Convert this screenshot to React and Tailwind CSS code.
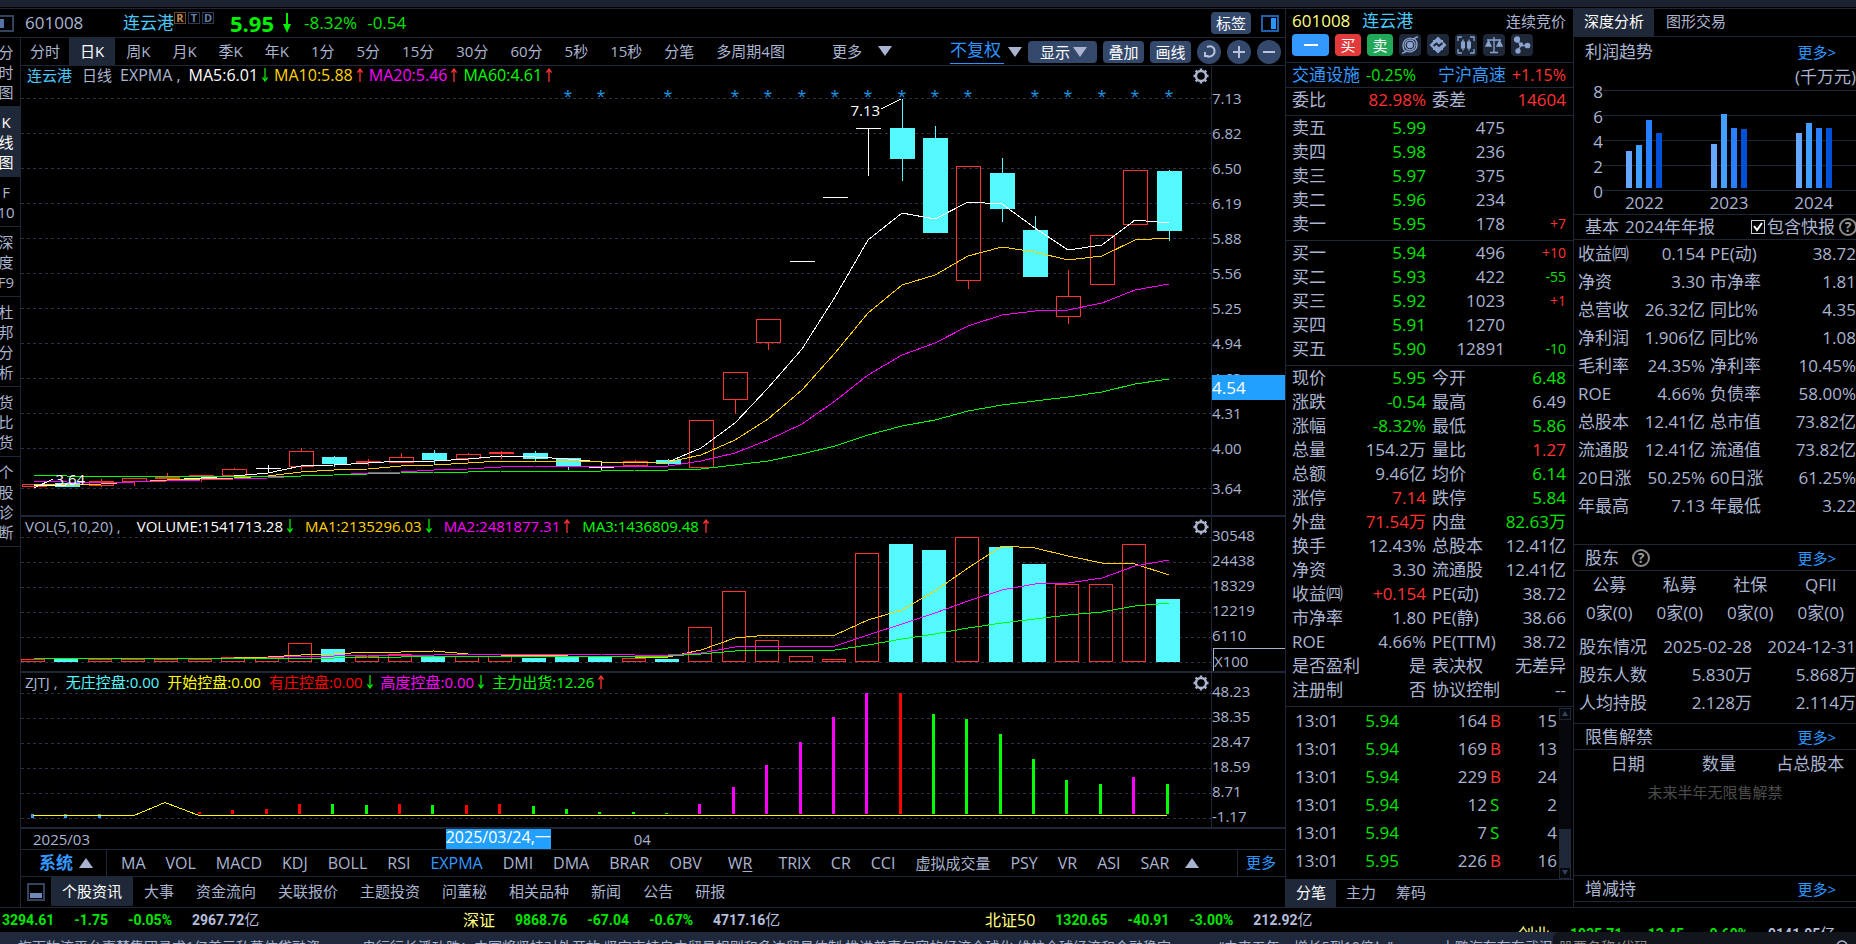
import { Fragment } from 'react'
import clsx from 'clsx'

const SIDE = ['分时图', 'K线图', 'F|10', '深度|F9', '杜邦分析', '货比货', '个股诊断']
const PERIODS = ['分时', '日K', '周K', '月K', '季K', '年K', '1分', '5分', '15分', '30分', '60分', '5秒', '15秒', '分笔', '多周期4图']
const INDICATORS = ['MA', 'VOL', 'MACD', 'KDJ', 'BOLL', 'RSI', 'EXPMA', 'DMI', 'DMA', 'BRAR', 'OBV', 'WR', 'TRIX', 'CR', 'CCI', '虚拟成交量', 'PSY', 'VR', 'ASI', 'SAR']
const INFO_TABS = ['个股资讯', '大事', '资金流向', '关联报价', '主题投资', '问董秘', '相关品种', '新闻', '公告', '研报']

const UP = '#ff3232'
const DOWN = '#54f8ff'

// chart space: x 21..1211, one bar every 33.37
const X = i => Math.round(34 + i * 33.37)

// [type, body top, body bottom, high, low]
const CANDLES = [
  ['u', 484, 486, 484, 486], ['d', 483, 487, 483, 487], ['u', 481, 485, 479, 487], ['u', 478, 481, 478, 486],
  ['u', 477, 478, 473, 480], ['u', 475, 476, 475, 482], ['u', 469, 475, 468, 476], ['x', 468, 468, 465, 472],
  ['u', 451, 466, 448, 470], ['d', 457, 464, 456, 467], ['u', 461, 462, 459, 466], ['u', 457, 462, 453, 462],
  ['d', 453, 460, 450, 465], ['u', 454, 458, 453, 462], ['u', 452, 453, 451, 459], ['d', 453, 459, 451, 461],
  ['d', 458, 466, 458, 470], ['x', 467, 467, 461, 471], ['u', 461, 465, 460, 465], ['d', 460, 464, 459, 466],
  ['u', 420, 467, 420, 467], ['u', 372, 399, 372, 414], ['u', 319, 342, 319, 350], ['x', 261, 261, 261, 261],
  ['x', 197, 197, 197, 197], ['x', 128, 128, 128, 176], ['d', 128, 159, 99, 181], ['d', 138, 233, 126, 233],
  ['u', 166, 280, 166, 289], ['d', 173, 209, 158, 222], ['d', 230, 277, 216, 277], ['u', 296, 316, 270, 324],
  ['u', 235, 284, 235, 284], ['u', 170, 224, 170, 224], ['d', 171, 231, 170, 241],
]

const MAS = [
  ['#ffffff', [486, 485, 484, 482, 480, 478, 476, 473, 466, 465, 463, 461, 461, 459, 456, 457, 459, 462, 462, 462, 448, 423, 388, 349, 297, 240, 213, 219, 202, 204, 228, 250, 245, 220, 223]],
  ['#ffd200', [484, 484, 484, 482, 480, 479, 478, 476, 472, 470, 469, 466, 465, 463, 461, 461, 461, 462, 462, 462, 455, 440, 419, 390, 353, 313, 285, 275, 256, 247, 252, 260, 256, 240, 238]],
  ['#ff00ff', [481, 482, 482, 482, 481, 480, 479, 478, 476, 475, 473, 472, 470, 469, 467, 466, 466, 466, 466, 466, 461, 453, 440, 424, 401, 375, 355, 343, 326, 315, 311, 310, 303, 290, 284]],
  ['#00ff00', [475, 476, 476, 476, 476, 476, 476, 476, 476, 475, 474, 473, 472, 472, 471, 471, 471, 471, 470, 470, 469, 465, 461, 454, 446, 435, 426, 420, 411, 405, 401, 397, 392, 384, 379]],
]

const VOL_TOPS = [659, 659, 659, 659, 659, 659, 657, 657, 643, 649, 656, 654, 656, 656, 656, 658, 657, 657, 658, 659, 627, 591, 640, 656, 659, 553, 544, 550, 537, 547, 564, 584, 584, 544, 599]
const VOL_DOWN = [1, 9, 12, 15, 16, 17, 19, 26, 27, 29, 30, 34]
const VOL_MAS = [
  ['#ffd200', [658, 658, 658, 658, 658, 658, 658, 657, 655, 654, 652, 652, 651, 654, 655, 655, 656, 656, 657, 657, 650, 638, 635, 635, 635, 620, 610, 591, 568, 546, 548, 556, 563, 564, 575]],
  ['#ff00ff', [658, 658, 658, 658, 658, 658, 658, 658, 656, 656, 655, 655, 655, 654, 654, 654, 654, 654, 655, 655, 653, 647, 646, 646, 646, 635, 624, 613, 601, 590, 584, 583, 578, 566, 560]],
  ['#00ff00', [658, 658, 658, 658, 658, 658, 658, 658, 658, 658, 657, 657, 656, 656, 656, 656, 656, 656, 656, 656, 654, 651, 650, 650, 650, 645, 639, 634, 628, 623, 619, 615, 612, 606, 603]],
]

const FLOW_COLORS = { r: '#ff0000', g: '#00ff00', m: '#ff00ff' }
const FLOW = [
  [5, 812, 'r'], [6, 810, 'r'], [7, 809, 'r'], [8, 804, 'r'], [9, 804, 'g'], [10, 805, 'g'], [11, 804, 'r'], [12, 805, 'g'],
  [13, 805, 'r'], [14, 804, 'r'], [15, 806, 'g'], [16, 809, 'g'], [17, 812, 'g'], [18, 812, 'g'], [19, 813, 'g'], [20, 804, 'm'],
  [21, 787, 'm'], [22, 765, 'm'], [23, 742, 'm'], [24, 717, 'm'], [25, 693, 'm'], [26, 693, 'r'], [27, 714, 'g'], [28, 719, 'g'],
  [29, 734, 'g'], [30, 759, 'g'], [31, 780, 'g'], [32, 784, 'g'], [33, 777, 'm'], [34, 784, 'g'],
]
const STARS = [16, 17, 19, 21, 22, 23, 24, 25, 26, 27, 28, 30, 31, 32, 33, 34]

const SELLS = [['卖五', '5.99', '475'], ['卖四', '5.98', '236'], ['卖三', '5.97', '375'], ['卖二', '5.96', '234'], ['卖一', '5.95', '178', '+7']]
const BUYS = [['买一', '5.94', '496', '+10'], ['买二', '5.93', '422', '-55'], ['买三', '5.92', '1023', '+1'], ['买四', '5.91', '1270'], ['买五', '5.90', '12891', '-10']]

const STATS = [
  ['现价', '5.95', 'g', '今开', '6.48', 'g'],
  ['涨跌', '-0.54', 'g', '最高', '6.49', ''],
  ['涨幅', '-8.32%', 'g', '最低', '5.86', 'g'],
  ['总量', '154.2万', '', '量比', '1.27', 'r'],
  ['总额', '9.46亿', '', '均价', '6.14', 'g'],
  ['涨停', '7.14', 'r', '跌停', '5.84', 'g'],
  ['外盘', '71.54万', 'r', '内盘', '82.63万', 'g'],
  ['换手', '12.43%', '', '总股本', '12.41亿', ''],
  ['净资', '3.30', '', '流通股', '12.41亿', ''],
  ['收益㈣', '+0.154', 'r', 'PE(动)', '38.72', ''],
  ['市净率', '1.80', '', 'PE(静)', '38.66', ''],
  ['ROE', '4.66%', '', 'PE(TTM)', '38.72', ''],
  ['是否盈利', '是', '', '表决权', '无差异', ''],
  ['注册制', '否', '', '协议控制', '--', ''],
]

const TICKS = [
  ['5.94', '164', 'B', '15'], ['5.94', '169', 'B', '13'], ['5.94', '229', 'B', '24'],
  ['5.94', '12', 'S', '2'], ['5.94', '7', 'S', '4'], ['5.95', '226', 'B', '16'],
]

const BASICS = [
  ['收益㈣', '0.154', 'PE(动)', '38.72'],
  ['净资', '3.30', '市净率', '1.81'],
  ['总营收', '26.32亿', '同比%', '4.35'],
  ['净利润', '1.906亿', '同比%', '1.08'],
  ['毛利率', '24.35%', '净利率', '10.45%'],
  ['ROE', '4.66%', '负债率', '58.00%'],
  ['总股本', '12.41亿', '总市值', '73.82亿'],
  ['流通股', '12.41亿', '流通值', '73.82亿'],
  ['20日涨', '50.25%', '60日涨', '61.25%'],
  ['年最高', '7.13', '年最低', '3.22'],
]

const PROFIT = [[1626, [151, 145, 120, 133]], [1711, [144, 114, 128, 129]], [1796, [133, 123, 128, 128]]]
const PROFIT_COLORS = ['#66a8ff', '#409fff', '#2980ff', '#0050d8']

const tone = t => (t === 'g' ? 'text-[#00e600]' : t === 'r' ? 'text-[#ff3232]' : '')
const line = ys => ys.map((y, i) => `${X(i)},${y}`).join(' ')

function Arrow({ up }) {
  return (
    <svg width="6" height="14" viewBox="0 0 6 14" fill="none" stroke={up ? '#ff3232' : '#00e600'} strokeWidth="1.3" className={up ? 'rotate-180' : ''}>
      <path d="M3 0V13M0.5 9.5L3 13L5.5 9.5" />
    </svg>
  )
}

function Triangle({ up }) {
  return (
    <svg width="14" height="10" viewBox="0 0 14 10" fill="#aab4d0" className={clsx('pointer-events-none shrink-0', up && 'rotate-180')}>
      <path d="M0 0H14L7 10Z" />
    </svg>
  )
}

function Gear() {
  return (
    <button aria-label="设置" className="absolute right-0.5 top-0.5">
      <svg width="16" height="16" viewBox="0 0 16 16" fill="none" stroke="#aab4d0" strokeWidth="2.4">
        <circle cx="8" cy="8" r="5" />
        <path d="M8 0.5V3M8 13V15.5M0.5 8H3M13 8H15.5M2.7 2.7L4.4 4.4M11.6 11.6L13.3 13.3M13.3 2.7L11.6 4.4M4.4 11.6L2.7 13.3" />
      </svg>
    </button>
  )
}

function Grid({ ys }) {
  return ys.map(y => <path key={y} d={`M21 ${y}.5H1211`} stroke="#2a3246" strokeDasharray="3 3" />)
}

function Legend({ children, className }) {
  return <div className={clsx('absolute left-1 top-0 flex items-center leading-[18px] whitespace-nowrap', className)}>{children}</div>
}

function Item({ color, up, children }) {
  return (
    <span className={clsx('flex items-center gap-1', color)}>
      {children}
      {up !== undefined && <Arrow up={up} />}
    </span>
  )
}

function Header() {
  return (
    <header className="flex items-center h-[29px] border-b border-[#1e2737] pr-1.5 text-[17px] leading-6">
      <button aria-label="左栏" className="-ml-1 w-[29px]">
        <svg width="18" height="17" viewBox="0 0 18 17"><rect x="1" y="1" width="16" height="15" fill="none" stroke="#33425f" strokeWidth="2" /><rect x="3" y="4" width="5" height="9" fill="#5673a8" /></svg>
      </button>
      <span className="w-[98px]">601008</span>
      <span className="text-[#4cc8fa]">连云港</span>
      <span className="flex gap-0.5 self-start pt-[3px] text-[11px] leading-3 font-bold">
        {['R', 'T', 'D'].map(b => (
          <span key={b} className={clsx('w-3 h-3 text-center border', b === 'R' ? 'border-[#6b4a2a] text-[#c08a50]' : 'border-[#2c3c58] text-[#6480ac]')}>
            <span className="block -mt-px">{b}</span>
          </span>
        ))}
      </span>
      <strong className="ml-4 text-[22px] text-[#00f000]">5.95</strong>
      <svg width="10" height="20" viewBox="0 0 10 20" className="ml-2" fill="#00f000"><path d="M4 0H6V11H9L5 20L1 11H4Z" /></svg>
      <span className="ml-3 text-[#00e600]">-8.32%</span>
      <span className="ml-2.5 text-[#00e600]">-0.54</span>
      <button className="ml-auto w-10 h-[22px] rounded bg-[#33486b] text-[15px] leading-5 text-white">标签</button>
      <button aria-label="右栏" className="ml-2.5">
        <svg width="18" height="17" viewBox="0 0 18 17"><rect x="1" y="1" width="16" height="15" fill="none" stroke="#1e5fae" strokeWidth="2" /><rect x="10" y="3" width="5" height="11" fill="#2b95ff" /></svg>
      </button>
    </header>
  )
}

function Sidebar() {
  return (
    <aside className="w-[29px] -ml-2 shrink-0 border-r border-[#1e2737] text-[15px] leading-5 text-center">
      {SIDE.map((s, i) => (
        <button key={s} className={clsx('block w-full pb-1 border-b border-[#1e2737]', i === 0 ? 'pt-1' : 'pt-[5px]', i === 1 && 'bg-[#1f2838] text-white')}>
          {(s.includes('|') ? s.split('|').flatMap((p, k) => (k ? [p] : [...p])) : [...s]).map((c, k) => (
            <span key={k} className="block">{c}</span>
          ))}
        </button>
      ))}
    </aside>
  )
}

function RoundButton({ label, d }) {
  return (
    <button aria-label={label} className="w-6 h-6 rounded-full bg-[#33486b] flex items-center justify-center">
      <svg width="16" height="16" viewBox="0 0 16 16" fill="none" stroke="#b8c2dc" strokeWidth="2"><path d={d} /></svg>
    </button>
  )
}

function PeriodBar() {
  return (
    <nav className="flex items-center h-7 border-b border-[#1e2737] pr-1 text-[15px] leading-6 whitespace-nowrap">
      {PERIODS.map((p, i) => (
        <button key={p} className={clsx('h-full pb-0.5', i === 0 ? 'px-[9px]' : 'px-[11px]', i === 1 && 'bg-[#1f2838] text-white')}>{p}</button>
      ))}
      <button className="ml-9 pb-0.5 flex items-center gap-4">更多 <Triangle /></button>
      <div className="ml-auto flex items-center gap-1.5">
        <div className="flex items-center gap-1">
          <select aria-label="复权" className="appearance-none w-[54px] text-[17px] leading-5 h-6 pb-1 text-[#2b95ff] border-b border-[#2b95ff]">
            <option>不复权</option>
          </select>
          <Triangle />
        </div>
        <div className="flex items-center w-[69px] h-[22px] pl-3 pr-2.5 rounded bg-[#33486b] text-white">
          <select aria-label="显示" className="appearance-none w-[38px] h-[22px] leading-5">
            <option>显示</option>
          </select>
          <Triangle />
        </div>
        <button className="w-[41px] h-[22px] leading-5 rounded bg-[#33486b] text-white">叠加</button>
        <button className="w-[41px] h-[22px] leading-5 rounded bg-[#33486b] text-white">画线</button>
        <RoundButton label="还原" d="M6 3C11 1 14 4 13.500 8C13 12 8 14 4 11.500M4 8V12H7.500" />
        <RoundButton label="放大" d="M8 2V14M2 8H14" />
        <RoundButton label="缩小" d="M2 8H14" />
      </div>
    </nav>
  )
}

function Candle({ i, c: [type, top, bottom, high, low] }) {
  const x = X(i)
  if (type === 'x') {
    return <path d={`M${x - 12} ${top + 0.5}H${x + 13}M${x + 0.5} ${high}V${low}`} stroke="#fff" />
  }
  if (type === 'd') {
    return (
      <g>
        <path d={`M${x + 0.5} ${high}V${low}`} stroke={DOWN} />
        <rect x={x - 12} y={top} width="25" height={bottom - top} fill={DOWN} />
      </g>
    )
  }
  return (
    <g stroke={UP} fill="none">
      <path d={`M${x + 0.5} ${high}V${top}M${x + 0.5} ${bottom}V${low}`} />
      <rect x={x - 11.5} y={top + 0.5} width="24" height={bottom - top} />
    </g>
  )
}

function Axis({ children, className }) {
  return <div className={clsx('w-[74px] shrink-0 border-l border-[#1e2737] text-[15px]', className)}>{children}</div>
}

function PriceChart() {
  return (
    <section className="flex h-[451px] border-b-2 border-[#1e2737]">
      <div className="relative flex-1 min-w-0">
        <svg width="100%" height="449" viewBox="21 66 1190 449" preserveAspectRatio="none" shapeRendering="crispEdges" fill="none">
          <Grid ys={[98, 133, 168, 203, 238, 273, 308, 343, 378, 413, 448, 488]} />
          {CANDLES.map((c, i) => <Candle key={i} i={i} c={c} />)}
          {MAS.map(([color, ys]) => <polyline key={color} points={line(ys)} stroke={color} />)}
          <path d="M881 109L901 99M34 488L53 479" stroke="#fff" />
        </svg>
        <Legend className="text-base">
          <span className="ml-0.5 text-[15px] text-[#4cc8fa]">连云港</span>
          <span className="ml-2.5 text-[15px]">日线</span>
          <span className="mx-2">EXPMA ,</span>
          <div className="flex gap-1.5">
            <Item color="text-white" up={false}>MA5:6.01</Item>
            <Item color="text-[#ffd200]" up>MA10:5.88</Item>
            <Item color="text-[#ff00ff]" up>MA20:5.46</Item>
            <Item color="text-[#00ff00]" up>MA60:4.61</Item>
          </div>
        </Legend>
        {STARS.map(i => (
          <span key={i} className="absolute top-5 -translate-x-1/2 text-base leading-5 text-[#2296e8]" style={{ left: `${((X(i) - 21) / 1190) * 100}%` }}>*</span>
        ))}
        <span className="absolute left-[69.7%] top-[34px] text-[15px] leading-5 text-white">7.13</span>
        <span className="absolute left-[2.9%] top-[403px] text-[15px] leading-5 text-white">3.64</span>
        <Gear />
      </div>
      <Axis className="relative pt-[15px] leading-[35px]">
        {['7.13', '6.82', '6.50', '6.19', '5.88', '5.56', '5.25', '4.94', '4.63', '4.31', '4.00'].map(v => <div key={v}>{v}</div>)}
        <div className="mt-[5px]">3.64</div>
        <div className="absolute inset-x-0 top-[309px] h-[25px] bg-[#22a0ff] text-[17px] leading-[25px] text-white">4.54</div>
      </Axis>
    </section>
  )
}

function VolumeChart() {
  return (
    <section className="flex h-[156px] border-b-2 border-[#1e2737]">
      <div className="relative flex-1 min-w-0">
        <svg width="100%" height="154" viewBox="21 517 1190 154" preserveAspectRatio="none" shapeRendering="crispEdges" fill="none">
          <Grid ys={[537, 562, 587, 612, 637, 662]} />
          {VOL_TOPS.map((y, i) => VOL_DOWN.includes(i)
            ? <rect key={i} x={X(i) - 13} y={y} width="24" height={662 - y} fill={DOWN} />
            : <rect key={i} x={X(i) - 12.5} y={y + 0.5} width="23" height={661 - y} stroke={UP} />)}
          {VOL_MAS.map(([color, ys]) => <polyline key={color} points={line(ys)} stroke={color} />)}
        </svg>
        <Legend className="text-[15px]">
          <span className="mr-4">VOL(5,10,20) ,</span>
          <div className="flex gap-3">
            <Item color="text-white" up={false}>VOLUME:1541713.28</Item>
            <Item color="text-[#ffd200]" up={false}>MA1:2135296.03</Item>
            <Item color="text-[#ff00ff]" up>MA2:2481877.31</Item>
            <Item color="text-[#00ff00]" up>MA3:1436809.48</Item>
          </div>
        </Legend>
        <Gear />
      </div>
      <Axis className="pt-1.5 leading-[25px]">
        {['30548', '24438', '18329', '12219', '6110'].map(v => <div key={v}>{v}</div>)}
        <div className="h-[23px] ml-px border-t border-l border-[#aab4d0]">X100</div>
      </Axis>
    </section>
  )
}

function FlowChart() {
  return (
    <section className="flex h-[156px] border-b-2 border-[#1e2737]">
      <div className="relative flex-1 min-w-0">
        <svg width="100%" height="154" viewBox="21 673 1190 154" preserveAspectRatio="none" shapeRendering="crispEdges" fill="none">
          <Grid ys={[693, 718, 743, 768, 793, 818]} />
          {FLOW.map(([i, y, c]) => <rect key={i} x={X(i) - 3} y={y} width="3" height={814 - y} fill={FLOW_COLORS[c]} />)}
          {[0, 1, 2].map(i => <rect key={i} x={X(i) - 3} y="814" width="3" height="4" fill="#3399ff" />)}
          <path d={`M33 815.5H${X(3)}L${X(4) - 2} 802.500L${X(5) - 2} 815.500H1167`} stroke="#ffff00" />
        </svg>
        <Legend className="gap-2 text-[15px]">
          <span>ZJTJ ,</span>
          <Item color="text-[#54f8ff]">无庄控盘:0.00</Item>
          <Item color="text-[#ffff00]">开始控盘:0.00</Item>
          <Item color="text-[#ff0000]" up={false}>有庄控盘:0.00</Item>
          <Item color="text-[#ff00ff]" up={false}>高度控盘:0.00</Item>
          <Item color="text-[#00ff00]" up>主力出货:12.26</Item>
        </Legend>
        <Gear />
      </div>
      <Axis className="pt-1.5 leading-[25px]">
        {['48.23', '38.35', '28.47', '18.59', '8.71', '-1.17'].map(v => <div key={v}>{v}</div>)}
      </Axis>
    </section>
  )
}

function DateAxis() {
  return (
    <div className="flex h-[21px] border-b border-[#1e2737] text-[15px] leading-[21px] whitespace-nowrap">
      <span className="w-[33.6%] pl-3">2025/03</span>
      <span className="h-5 w-[105px] bg-[#22a0ff] leading-4 text-base text-white overflow-hidden">2025/03/24,一</span>
      <span className="ml-[83px]">04</span>
    </div>
  )
}

function IndicatorBar() {
  return (
    <nav className="flex items-center h-[27px] border-b border-[#1e2737] text-base leading-6 whitespace-nowrap">
      <button className="flex items-center gap-1.5 w-[86px] h-full pl-[18px] border-r border-[#1e2737] text-[17px] font-bold text-[#3399ff]">
        系统 <Triangle up />
      </button>
      <div className="flex items-center pl-1">
        {INDICATORS.map(n => (
          <button key={n} className={clsx(n === 'WR' ? 'px-4' : 'px-2.5', n === 'EXPMA' && 'text-[#3399ff]', n === '虚拟成交量' && 'text-[15px]')}>
            {n === 'WR' ? <>W<u className="underline-offset-2">R</u></> : n}
          </button>
        ))}
        <button aria-label="展开" className="pl-1.5"><Triangle up /></button>
      </div>
      <a href="#more" className="ml-auto w-12 h-full pl-2 border-l border-[#1e2737] text-[15px] text-[#2b95ff]">更多</a>
    </nav>
  )
}

function InfoTabs() {
  return (
    <nav className="flex items-center h-[29px] text-[15px] leading-6 whitespace-nowrap">
      <button aria-label="收起" className="w-[30px] pl-1.5">
        <svg width="18" height="18" viewBox="0 0 18 18"><rect x="1" y="1" width="16" height="16" fill="none" stroke="#33425f" strokeWidth="2" /><rect x="3" y="10" width="12" height="5" fill="#7088b8" /></svg>
      </button>
      {INFO_TABS.map((t, i) => (
        <button key={t} className={clsx('px-[11px] h-full pb-0.5', i === 0 && 'bg-[#1f2838] text-white')}>{t}</button>
      ))}
    </nav>
  )
}

const TOOL_ICONS = [
  ['雷达', <Fragment key="a"><circle cx="9" cy="9" r="2.500" fill="#8ba3cf" /><circle cx="9" cy="9" r="5" /><path d="M1 17C3 17 4 16 5 15.500C1 13 1 6 5 3.500C8 1.500 11 2 13 3.500M17 1C15 1 14 2 13 2.500C17 5 17 12 13 14.500C10 16.500 7 16 5 14.500" /></Fragment>],
  ['异动', <Fragment key="b"><path fill="#8ba3cf" stroke="none" d="M9 0.500L12.500 4H14V5.500L17.500 9L14 12.500V14H12.500L9 17.500L5.500 14H4V12.500L0.500 9L4 5.500V4H5.500Z" /><path stroke="#1f2838" d="M4.500 10L7.500 7.500L10 10L13.500 7" strokeWidth="2" /></Fragment>],
  ['形态', <Fragment key="c"><path d="M1 5V1H5M13 1H17V5M17 13V17H13M5 17H1V13M6 3.500V14.500M12 3.500V14.500" /><path d="M6 5.500V12.500M12 5.500V12.500" strokeWidth="4" /></Fragment>],
  ['对比', <Fragment key="d"><path d="M9 1V16M5 16.500H13M2 4H16" /><path d="M1 10L3.500 5L6 10ZM12 10L14.500 5L17 10Z" fill="#8ba3cf" /></Fragment>],
  ['关联', <Fragment key="e"><path d="M4 4L8 9.500H14M8 9.500L5 14" /><g fill="#8ba3cf"><circle cx="4" cy="3.500" r="2.500" /><circle cx="14.500" cy="9.500" r="2.200" /><circle cx="5" cy="15" r="2" /><circle cx="8" cy="8.500" r="1.500" /></g></Fragment>],
]

function OrderRows({ rows }) {
  return (
    <table className="w-full table-fixed mb-1">
      <colgroup><col className="w-[55px]" /><col className="w-[79px]" /><col className="w-[79px]" /><col /></colgroup>
      <tbody>
        {rows.map(([label, price, qty, diff]) => (
          <tr key={label} className="h-6">
            <th scope="row" className="p-0 font-normal text-left">{label}</th>
            <td className="p-0 text-right text-[#00e600]">{price}</td>
            <td className="p-0 text-right">{qty}</td>
            <td className={clsx('p-0 text-right text-sm leading-6', diff?.startsWith('-') ? 'text-[#00e600]' : 'text-[#ff3232]')}>{diff}</td>
          </tr>
        ))}
      </tbody>
    </table>
  )
}

function QuotePanel() {
  return (
    <section className="flex flex-col w-[288px] shrink-0 border-l border-[#1e2737] text-[17px] leading-6 whitespace-nowrap">
      <div className="flex items-center h-[25px] pl-1.5 pr-[7px]">
        <span className="text-[#ffff80]">601008</span>
        <span className="ml-3 text-[#4cc8fa]">连云港</span>
        <span className="ml-auto text-[15px]">连续竞价</span>
      </div>
      <div className="flex items-center gap-1.5 h-[29px] pl-1.5 pb-1.5 border-b border-[#1e2737] text-[15px]">
        <button aria-label="收起" className="flex items-center justify-center w-[37px] h-[22px] rounded-sm bg-[#3399ff]"><span className="w-3.5 h-0.5 bg-white" /></button>
        <button className="w-[26px] h-[22px] rounded bg-[#e23a3a] leading-5 text-white">买</button>
        <button className="w-[26px] h-[22px] rounded bg-[#21a858] leading-5 text-white">卖</button>
        {TOOL_ICONS.map(([label, art]) => (
          <button key={label} aria-label={label} className="flex items-center justify-center w-[22px] h-[22px] rounded-sm bg-[#1f2838]">
            <svg width="18" height="18" viewBox="0 0 18 18" fill="none" stroke="#8ba3cf" strokeWidth="1.300">{art}</svg>
          </button>
        ))}
      </div>
      <div className="flex items-center h-[25px] pl-1.5 pr-[7px] border-b border-[#1e2737]">
        <a href="#sector" className="text-[#3399ff]">交通设施</a>
        <span className="ml-1.5 text-base text-[#00e600]">-0.25%</span>
        <a href="#leader" className="ml-auto text-[#3399ff]">宁沪高速</a>
        <span className="ml-1.5 text-base text-[#ff3232]">+1.15%</span>
      </div>
      <div className="flex items-center h-7 pl-1.5 pr-[7px] pb-[3px] border-b border-[#1e2737]">
        <span>委比</span>
        <span className="w-[100px] text-right text-[#ff3232]">82.98%</span>
        <span className="ml-1.5">委差</span>
        <span className="ml-auto text-[#ff3232]">14604</span>
      </div>
      <div className="pl-1.5 pr-[7px] border-b border-[#1e2737]"><OrderRows rows={SELLS} /></div>
      <div className="pl-1.5 pr-[7px] border-b border-[#1e2737]"><OrderRows rows={BUYS} /></div>
      <div className="pl-1.5 pr-[7px] border-b border-[#1e2737]">
        <table className="w-full table-fixed mb-1">
          <colgroup><col className="w-[72px]" /><col className="w-[62px]" /><col className="w-[78px]" /><col /></colgroup>
          <tbody>
            {STATS.map(([a, av, at, b, bv, bt]) => (
              <tr key={a} className="h-6">
                <th scope="row" className="p-0 font-normal text-left">{a}</th>
                <td className={clsx('p-0 text-right', tone(at))}>{av}</td>
                <th scope="row" className="p-0 pl-1.5 font-normal text-left">{b}</th>
                <td className={clsx('p-0 text-right', tone(bt))}>{bv}</td>
              </tr>
            ))}
          </tbody>
        </table>
      </div>
      <div className="flex gap-0.5 h-[174px] pl-[9px] pr-0.5 border-b border-[#1e2737]">
        <table className="flex-1 table-fixed self-start">
          <colgroup><col className="w-[70px]" /><col className="w-[34px]" /><col className="w-[88px]" /><col className="w-[15px]" /><col /></colgroup>
          <tbody>
            {TICKS.map(([price, vol, side, n], i) => (
              <tr key={i} className="h-7">
                <td className="p-0">13:01</td>
                <td className="p-0 text-right text-[#00e600]">{price}</td>
                <td className="p-0 text-right">{vol}</td>
                <td className={clsx('p-0 pl-[3px]', side === 'B' ? 'text-[#ff3232]' : 'text-[#00e600]')}>{side}</td>
                <td className="p-0 text-right">{n}</td>
              </tr>
            ))}
          </tbody>
        </table>
        <div className="flex flex-col justify-between w-3 h-[171px] mt-px bg-[#06080c]">
          <button aria-label="上滚" className="flex items-center justify-center h-3 border border-[#1f2838]"><svg width="6" height="5"><path d="M3 0L6 5H0Z" fill="#33425f" /></svg></button>
          <div className="mt-auto h-[38px] bg-[#1f2838]" />
          <button aria-label="下滚" className="flex items-center justify-center h-3 border border-[#1f2838]"><svg width="6" height="5"><path d="M3 5L6 0H0Z" fill="#33425f" /></svg></button>
        </div>
      </div>
      <nav className="flex flex-1 text-[15px]">
        <button className="px-2.5 pb-[3px] bg-[#1f2838] text-white">分笔</button>
        <button className="px-2.5 pb-[3px]">主力</button>
        <button className="px-2.5 pb-[3px]">筹码</button>
      </nav>
    </section>
  )
}

function Help() {
  return (
    <button aria-label="说明" className="flex items-center justify-center w-[18px] h-[18px] shrink-0 rounded-full border-2 border-[#8c8c8c] text-sm leading-none font-bold text-[#9a9a9a]">?</button>
  )
}

function SectionHead({ title, help, className }) {
  return (
    <div className={clsx('flex items-center gap-[13px] pl-[11px] pr-5', className)}>
      <h2>{title}</h2>
      {help && <Help />}
      <a href="#more" className="ml-auto text-[15px] text-[#2b95ff]">更多&gt;</a>
    </div>
  )
}

function DeepPanel() {
  return (
    <section className="flex flex-col w-[283px] shrink-0 border-l border-[#1e2737] text-[17px] leading-6 whitespace-nowrap overflow-hidden">
      <nav className="flex h-7 border-b border-[#1e2737] text-[15px]">
        <button className="px-2.5 pb-[3px] bg-[#1f2838] text-white">深度分析</button>
        <button className="px-3 pb-[3px]">图形交易</button>
      </nav>
      <SectionHead title="利润趋势" className="h-[30px]" />
      <div className="h-5 leading-5 text-right">(千万元)</div>
      <div className="flex h-[106px]">
        <div className="w-[29px] -mt-2 text-right leading-[25px]">
          {[8, 6, 4, 2, 0].map(n => <div key={n}>{n}</div>)}
        </div>
        <svg width="253" height="106" viewBox="1603 87 253 106" preserveAspectRatio="none" shapeRendering="crispEdges" className="flex-1">
          {[90, 115, 140, 165, 190].map(y => <path key={y} d={`M1603 ${y}.5H1856`} stroke="#1e2737" />)}
          {PROFIT.map(([x, tops]) => tops.map((y, k) => <rect key={x + k} x={x + k * 10} y={y} width="6" height={188 - y} fill={PROFIT_COLORS[k]} />))}
        </svg>
      </div>
      <div className="flex h-[22px] pl-7 leading-5 text-center border-b border-[#1e2737]">
        {[2022, 2023, 2024].map(y => <span key={y} className="flex-1">{y}</span>)}
      </div>
      <div className="flex items-center h-[25px] pl-[11px] border-b border-[#1e2737]">
        <h2>基本</h2>
        <span className="ml-1.5">2024年年报</span>
        <label className="relative ml-auto flex items-center gap-0.5">
          <input type="checkbox" defaultChecked className="appearance-none w-3.5 h-3.5 border border-[#c8d0e4]" />
          <svg width="14" height="14" viewBox="0 0 14 14" className="absolute left-0 pointer-events-none" fill="none" stroke="#fff" strokeWidth="2"><path d="M3 6L6 10L11 3" /></svg>
          包含快报
        </label>
        <span className="ml-1 -mr-px"><Help /></span>
      </div>
      <table className="table-fixed ml-1 w-[278px]">
        <colgroup><col className="w-[60px]" /><col className="w-[67px]" /><col className="w-[78px]" /><col /></colgroup>
        <tbody>
          {BASICS.map(([a, av, b, bv]) => (
            <tr key={a} className="h-7">
              <th scope="row" className="p-0 font-normal text-left">{a}</th>
              <td className="p-0 text-right">{av}</td>
              <th scope="row" className="p-0 pl-[5px] font-normal text-left">{b}</th>
              <td className="p-0 text-right">{bv}</td>
            </tr>
          ))}
        </tbody>
      </table>
      <SectionHead title="股东" help className="mt-6 h-[27px] border-y border-[#1e2737]" />
      <table className="w-full table-fixed text-center">
        <thead><tr className="h-7">{['公募', '私募', '社保', 'QFII'].map(n => <th key={n} className="p-0 font-normal">{n}</th>)}</tr></thead>
        <tbody><tr className="h-7">{[0, 1, 2, 3].map(n => <td key={n} className="p-0">0家(0)</td>)}</tr></tbody>
      </table>
      <table className="table-fixed ml-[5px] my-1.5 w-[277px] text-right">
        <colgroup><col className="w-[72px]" /><col className="w-[101px]" /><col /></colgroup>
        <tbody>
          {[['股东情况', '2025-02-28', '2024-12-31'], ['股东人数', '5.830万', '5.868万'], ['人均持股', '2.128万', '2.114万']].map(([a, b, c]) => (
            <tr key={a} className="h-7">
              <th scope="row" className="p-0 font-normal text-left">{a}</th>
              <td className="p-0">{b}</td>
              <td className="p-0">{c}</td>
            </tr>
          ))}
        </tbody>
      </table>
      <SectionHead title="限售解禁" className="h-[27px] border-y border-[#1e2737]" />
      <div className="flex h-7 pl-2 leading-7 text-center">
        {['日期', '数量', '占总股本'].map(n => <span key={n} className="flex-1">{n}</span>)}
      </div>
      <p className="text-[15px] leading-7 text-center text-[#4c4c4c]">未来半年无限售解禁</p>
      <SectionHead title="增减持" className="mt-auto mb-[5px] h-[27px] border-y border-[#1e2737]" />
    </section>
  )
}

function IndexQuote({ name, values, className }) {
  const [price, diff, pct, amount] = values
  return (
    <div className={clsx('flex items-center gap-5 h-[23px] shrink-0 text-[#00e600] font-[Roboto] text-sm font-bold whitespace-nowrap', className)}>
      {name && <span className="text-base font-normal text-[#ffff80] font-[Open_Sans,Noto_Sans_CJK_SC,sans-serif]">{name}</span>}
      <span>{price}</span>
      <span>{diff}</span>
      <span>{pct}</span>
      <span className="text-[#b4bedb]">{amount}<span className="text-[15px] leading-4 font-normal font-[Noto_Sans_CJK_SC,sans-serif]">亿</span></span>
    </div>
  )
}

export default function App() {
  return (
    <div className="flex flex-col h-screen overflow-hidden bg-black text-[#aab4d0] font-[Open_Sans,Noto_Sans_CJK_SC,sans-serif]">
      <div className="h-[7px] shrink-0 bg-[#1b2130]" />
      <main className="flex shrink-0 h-[899px] mt-px border-t border-[#1e2737]">
        <div className="flex flex-col flex-1 min-w-0">
          <Header />
          <div className="flex flex-1 min-h-0">
            <Sidebar />
            <div className="flex-1 min-w-0">
              <PeriodBar />
              <PriceChart />
              <VolumeChart />
              <FlowChart />
              <DateAxis />
              <IndicatorBar />
              <InfoTabs />
            </div>
          </div>
        </div>
        <QuotePanel />
        <DeepPanel />
      </main>
      <div className="flex shrink-0 h-[25px] pl-0.5 border-t border-[#1e2737] overflow-hidden">
        <IndexQuote values={['3294.61', '-1.75', '-0.05%', '2967.72']} className="w-[461px]" />
        <IndexQuote name="深证" values={['9868.76', '-67.04', '-0.67%', '4717.16']} className="w-[522px]" />
        <IndexQuote name="北证50" values={['1320.65', '-40.91', '-3.00%', '212.92']} className="w-[533px]" />
        <IndexQuote name="创业" values={['1935.71', '-13.45', '-0.69%', '9141.95']} className="mt-3.5" />
      </div>
      <footer className="flex shrink-0 h-[30px] bg-[#1f293b] text-sm leading-[30px] whitespace-nowrap">
        <div className="flex flex-1 min-w-0 gap-12 pl-[18px] overflow-hidden">
          <a href="#n1" className="-mr-1.5">旗下物流平台嘉楚集团寻求1亿美元私募信贷融资</a>
          <a href="#n2">央行行长潘功胜：中国将坚持对外开放 坚定支持自由贸易规则和多边贸易体制 推进普惠包容的经济全球化 维护全球经济和金融稳定</a>
          <a href="#n3">“未来五年，增长5到10倍！”</a>
          <a href="#n4">小鹏汽车在东武汉成立</a>
        </div>
        <label className="flex items-center w-[303px] shrink-0 px-1.5 rounded-tl-md bg-[#12151c]">
          <input type="text" aria-label="股票搜索" placeholder="股票名称/代码" className="flex-1 min-w-0 placeholder:text-[#8a8a8a]" />
          <svg width="14" height="14" viewBox="0 0 14 14" fill="none" stroke="#aab4d0" strokeWidth="1.500"><circle cx="6" cy="6" r="5" /><path d="M10 10L13.500 13.500" /></svg>
        </label>
      </footer>
    </div>
  )
}
